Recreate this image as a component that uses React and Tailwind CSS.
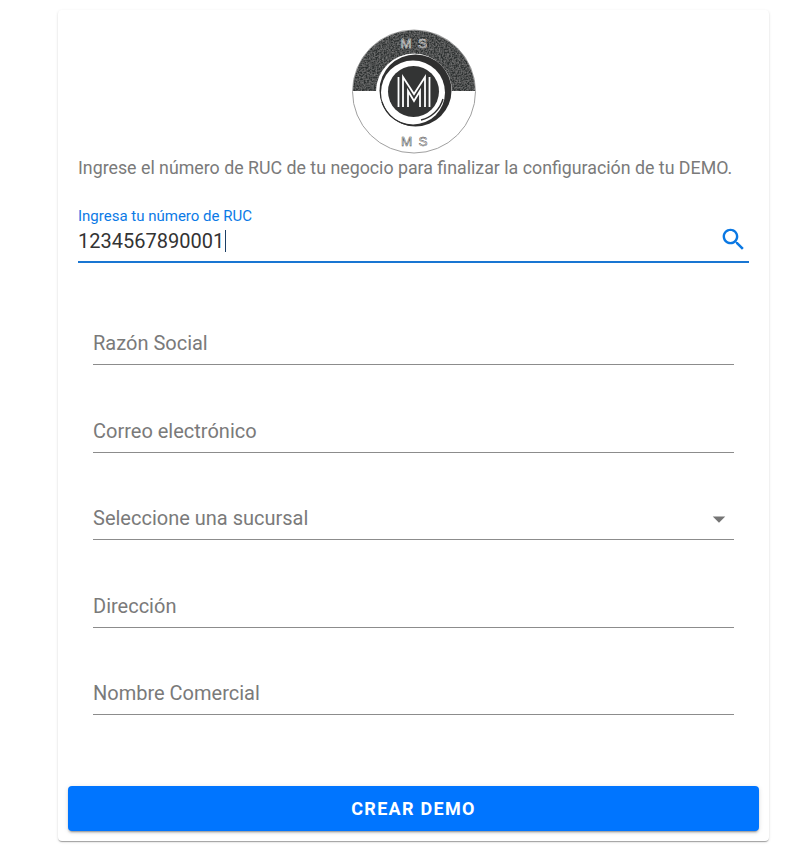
import React from "react";

const Logo = () => (
  <svg width="126" height="126" viewBox="0 0 126 126" className="block">
    <defs>
      <clipPath id="disc">
        <circle cx="63" cy="62.5" r="61" />
      </clipPath>
      <filter id="grain" x="0" y="0" width="100%" height="100%">
        <feTurbulence type="fractalNoise" baseFrequency="0.6" numOctaves="2" seed="4" />
        <feColorMatrix values="0 0 0 0 0.36  0 0 0 0 0.36  0 0 0 0 0.36  0.9 0 0 0 -0.3" />
        <feComposite in2="SourceGraphic" operator="in" result="noise" />
        <feMerge>
          <feMergeNode in="SourceGraphic" />
          <feMergeNode in="noise" />
        </feMerge>
      </filter>
    </defs>
    <circle cx="63" cy="62.5" r="61.5" fill="#fff" stroke="#a0a0a0" strokeWidth="1" />
    <rect x="0" y="0" width="126" height="62" fill="#2f3030" clipPath="url(#disc)" filter="url(#grain)" />
    <circle cx="63" cy="62.5" r="38" fill="#fff" />
    <circle cx="64.5" cy="61.5" r="36" fill="#2f2f2f" />
    <circle cx="62" cy="63.5" r="32" fill="#fff" />
    <path d="M 31 73 A 34 34 0 0 0 62 96.5" fill="none" stroke="#2f2f2f" strokeWidth="1.2" />
    <path d="M 70 91 A 30 30 0 0 0 92 70" fill="none" stroke="#2f2f2f" strokeWidth="1.4" />
    <circle cx="62.5" cy="62.5" r="25.5" fill="#333434" />
    <g fill="none" stroke="#fff" strokeWidth="1.8">
      <path d="M 47.5 78 V 48" />
      <path d="M 52 78 V 48 L 63 65 L 74 48 V 78" />
      <path d="M 78.5 78 V 48" />
      <path d="M 57 78 V 62 L 63 72 L 69 62 V 78" />
    </g>
    <g fontFamily="'Liberation Sans', sans-serif" fontSize="13.5" textAnchor="middle" fill="none" strokeWidth="0.5">
      <text x="55" y="19" stroke="#e8e8e8">M</text>
      <text x="71.5" y="19" stroke="#e8e8e8">S</text>
      <text x="55.5" y="117" stroke="#444">M</text>
      <text x="72" y="117" stroke="#444">S</text>
    </g>
  </svg>
);

const Field = ({ label, select, className }) => (
  <div className={`relative flex h-[36px] items-center justify-between border-b border-[#8c8c8c] ${className}`}>
    <span className="pb-[8px] text-[20px] leading-[24px] text-[#7a7a7a]">{label}</span>
    {select && (
      <svg width="30" height="30" viewBox="0 0 24 24" className="mb-[6px]" fill="#757575">
        <path d="M7 10l5 5 5-5z" />
      </svg>
    )}
  </div>
);

export default function App() {
  return (
    <div className="h-[847px] bg-white pt-[10px] pl-[58px] font-['Roboto',sans-serif]">
      <div className="flex h-[831px] w-[711px] flex-col rounded-[4px] bg-white px-[10px] pt-[19px] shadow-[0_2px_1px_-1px_rgba(0,0,0,0.2),0_1px_1px_0_rgba(0,0,0,0.14),0_1px_3px_0_rgba(0,0,0,0.12)]">
        <div className="flex justify-center">
          <Logo />
        </div>
        <p className="ml-[10px] mt-[1px] whitespace-nowrap text-[17.8px] leading-[24px] text-[#7a7a7a]">
          Ingrese el número de RUC de tu negocio para finalizar la configuración de tu DEMO.
        </p>
        <div className="mx-[10px] mt-[26px] border-b-2 border-[#1976d2]">
          <div className="text-[15px] leading-[20px] text-[#0b7ae6]">Ingresa tu número de RUC</div>
          <div className="flex h-[35px] items-start justify-between">
            <span className="flex h-[30px] items-center text-[20px] text-[#333333]">
              1234567890001
              <span className="ml-[1px] h-[22px] w-[1px] bg-[#1d3f66]" />
            </span>
            <svg width="29" height="29" viewBox="0 0 24 24" className="mr-[1px] -mt-[1px]" fill="#0b78e3">
              <path d="M15.5 14h-.79l-.28-.27C15.41 12.59 16 11.11 16 9.5 16 5.91 13.09 3 9.5 3S3 5.91 3 9.5 5.91 16 9.5 16c1.61 0 3.09-.59 4.23-1.57l.27.28v.79l5 4.99L20.49 19l-4.99-5zm-6 0C7.01 14 5 11.99 5 9.5S7.01 5 9.5 5 14 7.01 14 9.5 11.99 14 9.5 14z" />
            </svg>
          </div>
        </div>
        <div className="mx-[25px]">
          <Field label="Razón Social" className="mt-[66px]" />
          <Field label="Correo electrónico" className="mt-[52px]" />
          <Field label="Seleccione una sucursal" select className="mt-[51px]" />
          <Field label="Dirección" className="mt-[52px]" />
          <Field label="Nombre Comercial" className="mt-[51px]" />
        </div>
        <button className="mt-[71px] h-[45px] w-full rounded-[4px] bg-[#0075ff] text-[18px] font-bold tracking-[1.3px] text-white shadow-[0_3px_1px_-2px_rgba(0,0,0,0.2),0_2px_2px_0_rgba(0,0,0,0.14),0_1px_5px_0_rgba(0,0,0,0.12)]">
          CREAR DEMO
        </button>
      </div>
    </div>
  );
}
